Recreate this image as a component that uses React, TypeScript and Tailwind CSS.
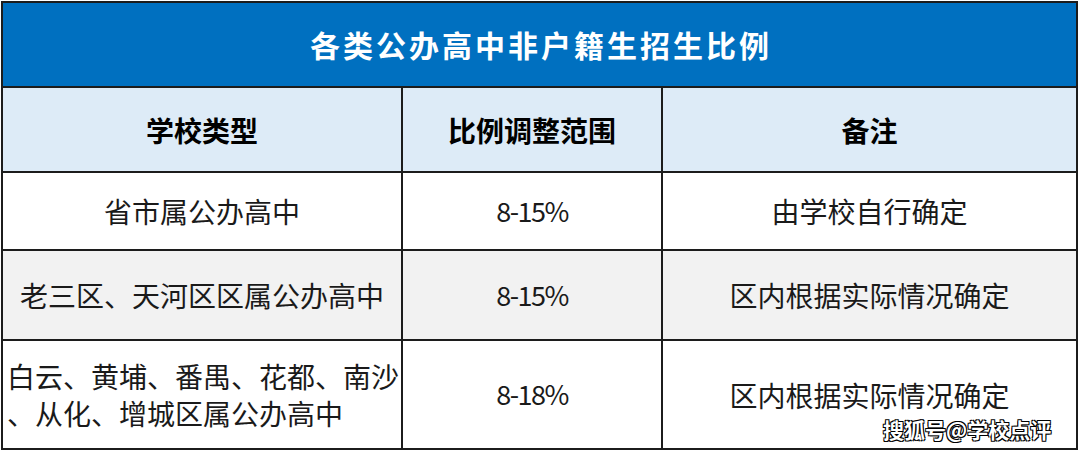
import React from "react";

const font = { fontFamily: '"Noto Sans CJK SC", "Noto Sans", sans-serif' };

function Cell({ children, className = "" }: { children: React.ReactNode; className?: string }) {
  return (
    <div className={`flex items-center justify-center text-[28px] text-[#1a1a1a] ${className}`}>
      {children}
    </div>
  );
}

function Num({ children, bg }: { children: React.ReactNode; bg: string }) {
  return (
    <div className={`flex items-center justify-center text-[27px] tracking-[-1.5px] text-[#1a1a1a] ${bg}`}>
      {children}
    </div>
  );
}

export default function App() {
  return (
    <div className="w-[1080px] h-[454px] bg-white relative" style={font}>
      <div className="pt-px pl-px">
        <div className="grid w-[1077px] grid-cols-[398px_258px_413px] grid-rows-[83px_83px_76px_88px_107px] gap-[2px] bg-[#1c1c1c] p-[2px]">
          <div className="col-span-3 flex items-center justify-center bg-[#0070c0] text-white text-[30px] font-bold tracking-[3px] pl-[3px]">
            各类公办高中非户籍生招生比例
          </div>
          <Cell className="bg-[#ddebf7] font-bold text-black">学校类型</Cell>
          <Cell className="bg-[#ddebf7] font-bold text-black">比例调整范围</Cell>
          <Cell className="bg-[#ddebf7] font-bold text-black">备注</Cell>

          <Cell className="bg-white">省市属公办高中</Cell>
          <Num bg="bg-white">8-15%</Num>
          <Cell className="bg-white">由学校自行确定</Cell>

          <Cell className="bg-[#f2f2f2]">老三区、天河区区属公办高中</Cell>
          <Num bg="bg-[#f2f2f2]">8-15%</Num>
          <Cell className="bg-[#f2f2f2]">区内根据实际情况确定</Cell>

          <div className="bg-white flex flex-col justify-center pl-[4px] text-[28px] leading-[37px] text-[#1a1a1a] whitespace-nowrap">
            <div>白云、黄埔、番禺、花都、南沙</div>
            <div>、从化、增城区属公办高中</div>
          </div>
          <Num bg="bg-white">8-18%</Num>
          <Cell className="bg-white">区内根据实际情况确定</Cell>
        </div>
      </div>
      <div
        className="absolute left-[883px] top-[414px] text-[21px] font-bold text-white whitespace-nowrap"
        style={{ textShadow: "1px 1px 0 #000, -1px -1px 0 #000, 1px -1px 0 #000, -1px 1px 0 #000" }}
      >
        搜狐号@学校点评
      </div>
    </div>
  );
}
